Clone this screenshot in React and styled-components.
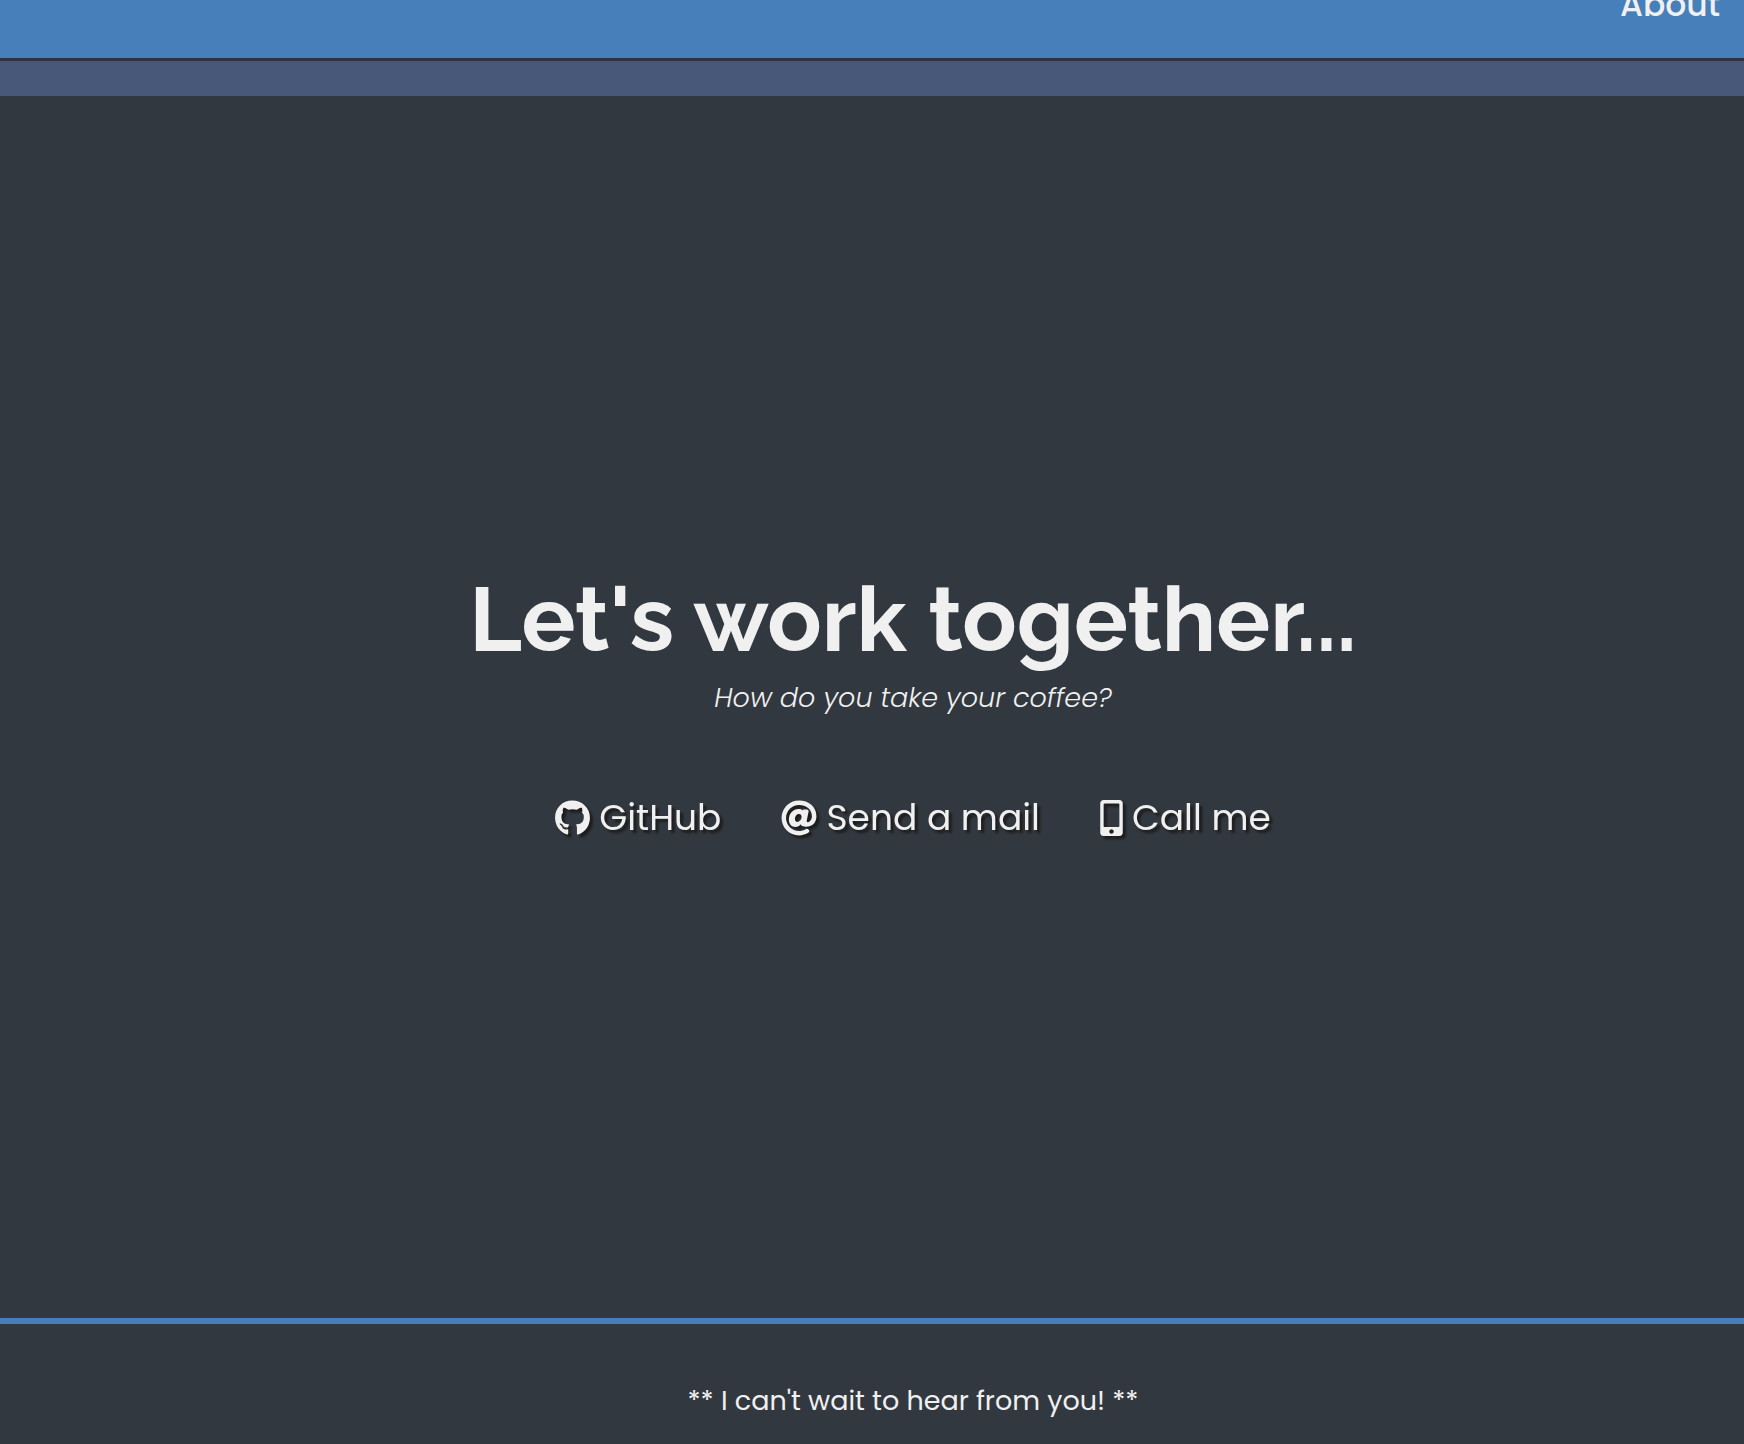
import React from "react";
import styled, { createGlobalStyle } from "styled-components";
import { FaGithub, FaAt, FaMobileAlt } from "react-icons/fa";

const GlobalStyle = createGlobalStyle`
  *, *::before, *::after { box-sizing: border-box; }
  body {
    margin: 0;
    background: #32383f;
    color: #f0f0f0;
    font-family: Poppins, Inter, sans-serif;
  }
`;

const Page = styled.div`
  min-height: 100vh;
  display: flex;
  flex-direction: column;
`;

const Header = styled.header`
  height: 61px;
  flex: none;
  display: flex;
  justify-content: flex-end;
  align-items: flex-end;
  padding: 0 24px 26px;
  overflow: hidden;
  background: #467fba;
  border-bottom: 3px solid #2d3347;
`;

const NavLink = styled.a`
  color: inherit;
  text-decoration: none;
  font-size: 33px;
  font-weight: 500;
  line-height: 54px;
`;

const Band = styled.div`
  height: 35px;
  flex: none;
  background: #485878;
`;

const Contact = styled.main`
  flex: 1;
  display: flex;
  flex-direction: column;
  align-items: center;
  justify-content: center;
  padding-left: 82px;
`;

const Title = styled.h1`
  margin: 0;
  font-family: Raleway, Lato, sans-serif;
  font-size: 90px;
  line-height: 116px;
  font-weight: 700;
`;

const Tagline = styled.p`
  margin: 0;
  font-size: 27px;
  line-height: 42px;
  font-style: italic;
  font-weight: 300;
`;

const Links = styled.nav`
  display: flex;
  flex-wrap: wrap;
  gap: 60px;
  padding: 72px 0 8px;
`;

const ContactLink = styled.a`
  display: flex;
  align-items: center;
  gap: 9px;
  color: inherit;
  text-decoration: none;
  font-size: 36px;
  line-height: 54px;
  filter: drop-shadow(3px 3px 1px #1c1c1c);

  svg {
    flex: none;
    width: ${({ $iconWidth }) => $iconWidth}px;
    height: 36px;
  }
`;

const Footer = styled.footer`
  border-top: 6px solid #467fba;
  padding: 56px 0 22px 82px;
  text-align: center;
  font-size: 27px;
  line-height: 42px;
`;

const FooterText = styled.p`
  margin: 0;
`;

const links = [
  { label: "GitHub", href: "#github", Icon: FaGithub, iconWidth: 35 },
  { label: "Send a mail", href: "#mail", Icon: FaAt, iconWidth: 36 },
  { label: "Call me", href: "#call", Icon: FaMobileAlt, iconWidth: 23 },
];

export default function App() {
  return (
    <Page>
      <GlobalStyle />
      <Header>
        <NavLink href="#about">About</NavLink>
      </Header>
      <Band />
      <Contact>
        <Title>Let's work together...</Title>
        <Tagline>How do you take your coffee?</Tagline>
        <Links>
          {links.map(({ label, href, Icon, iconWidth }) => (
            <ContactLink key={label} href={href} $iconWidth={iconWidth}>
              <Icon aria-hidden="true" />
              <span>{label}</span>
            </ContactLink>
          ))}
        </Links>
      </Contact>
      <Footer>
        <FooterText>** I can't wait to hear from you! **</FooterText>
      </Footer>
    </Page>
  );
}
